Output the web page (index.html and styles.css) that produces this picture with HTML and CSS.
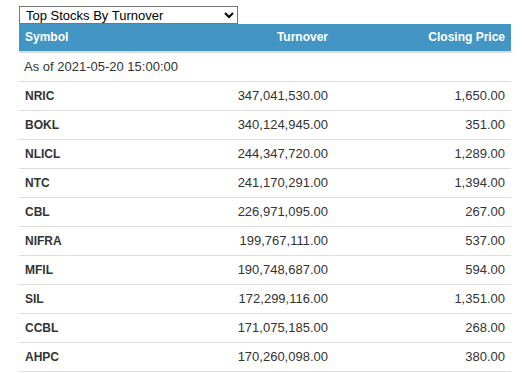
FILE: index.html
```html
<!DOCTYPE html>
<html>
<head>
<meta charset="utf-8">
<link rel="stylesheet" href="styles.css">
</head>
<body>
<div class="wrap">
  <select class="picker">
    <option>Top Stocks By Turnover</option>
    <option>Top Stocks By Volume</option>
  </select>
  <table class="stocks">
    <colgroup>
      <col class="c-sym">
      <col class="c-turn">
      <col class="c-price">
    </colgroup>
    <thead>
      <tr><th class="l">Symbol</th><th class="r">Turnover</th><th class="r">Closing Price</th></tr>
    </thead>
    <tbody>
      <tr><td colspan="3" class="asof">As of 2021-05-20 15:00:00</td></tr>
      <tr><td class="sym">NRIC</td><td class="r">347,041,530.00</td><td class="r">1,650.00</td></tr>
      <tr><td class="sym">BOKL</td><td class="r">340,124,945.00</td><td class="r">351.00</td></tr>
      <tr><td class="sym">NLICL</td><td class="r">244,347,720.00</td><td class="r">1,289.00</td></tr>
      <tr><td class="sym">NTC</td><td class="r">241,170,291.00</td><td class="r">1,394.00</td></tr>
      <tr><td class="sym">CBL</td><td class="r">226,971,095.00</td><td class="r">267.00</td></tr>
      <tr><td class="sym">NIFRA</td><td class="r">199,767,111.00</td><td class="r">537.00</td></tr>
      <tr><td class="sym">MFIL</td><td class="r">190,748,687.00</td><td class="r">594.00</td></tr>
      <tr><td class="sym">SIL</td><td class="r">172,299,116.00</td><td class="r">1,351.00</td></tr>
      <tr><td class="sym">CCBL</td><td class="r">171,075,185.00</td><td class="r">268.00</td></tr>
      <tr><td class="sym">AHPC</td><td class="r">170,260,098.00</td><td class="r">380.00</td></tr>
    </tbody>
  </table>
</div>
</body>
</html>
```
FILE: styles.css
```css
html, body {
  margin: 0;
  padding: 0;
  background: #ffffff;
}
body {
  font-family: "Liberation Sans", Arial, sans-serif;
  font-size: 13px;
  color: #333333;
}
.wrap {
  padding: 6px 0 0 19px;
  width: 492px;
}
.picker {
  display: block;
  width: 219px;
  height: 18px;
  margin: 0;
  font-family: "Liberation Sans", Arial, sans-serif;
  font-size: 13px;
  color: #000;
  border: 1px solid #767676;
  border-radius: 0;
  padding: 0 0 0 2px;
  background: #fff;
}
.stocks {
  width: 492px;
  border-collapse: collapse;
  table-layout: fixed;
}
.c-sym { width: 150px; }
.c-turn { width: 165px; }
.c-price { width: 177px; }
.stocks th {
  background: #4396c4;
  color: #ffffff;
  font-size: 12px;
  font-weight: bold;
  height: 27px;
  padding: 0 6px 0 6px;
  line-height: 17px;
  border-bottom: 2px solid #dddddd;
}
.stocks td {
  height: 28px;
  padding: 0 6px 0 5px;
  line-height: 18px;
  border-bottom: 1px solid #dddddd;
}
.l { text-align: left; }
.r { text-align: right; }
.stocks td.sym {
  font-size: 12px;
  font-weight: bold;
  padding-left: 6px;
}
.asof { text-align: left; }
```
